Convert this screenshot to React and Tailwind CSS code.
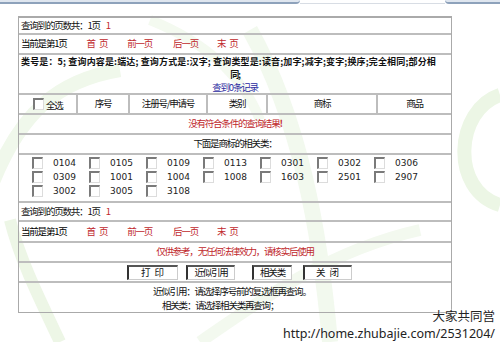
import React from 'react';

const codes = ['0104', '0105', '0109', '0113', '0301', '0302', '0306', '0309', '1001', '1004', '1008', '1603', '2501', '2907', '3002', '3005', '3108'];

function Box() {
  return <span className="inline-block h-[12px] w-[11px] shrink-0 border-l-2 border-t-2 border-b border-r border-l-[#7a7a7a] border-t-[#7a7a7a] border-b-[#dcdcdc] border-r-[#dcdcdc] bg-white" />;
}

function Btn({ children, className = '' }) {
  return (
    <span className={`flex h-[15px] items-center justify-center border-l-2 border-t-2 border-b border-r border-l-[#333] border-t-[#555] border-b-[#ccc] border-r-[#ccc] bg-white ${className}`}>
      {children}
    </span>
  );
}

function Pager({ first, second }) {
  return (
    <>
      <div className={`flex items-center border-b-2 border-[#bdbdbd] pl-[2px] ${first}`}>
        <span>查询到的页数共：1页</span>
        <span className="ml-[6px] text-[#c0282c]">1</span>
      </div>
      <div className={`flex items-center border-b-2 border-[#bdbdbd] pl-[2px] text-[#c0282c] ${second}`}>
        <span className="text-black">当前是第1页</span>
        <span className="ml-[20px]">首<span className="ml-[4px]">页</span></span>
        <span className="ml-[20px]">前一页</span>
        <span className="ml-[21px]">后一页</span>
        <span className="ml-[19px]">末<span className="ml-[4px]">页</span></span>
      </div>
    </>
  );
}

export default function App() {
  return (
    <div className='relative h-[342px] w-[500px] overflow-hidden bg-white font-["Noto_Sans_CJK_SC",sans-serif] text-[9.5px] leading-none tracking-[-1.2px] text-[#111]'>
      <svg className="absolute inset-0" width="500" height="342" viewBox="0 0 500 342" fill="none">
        <path d="M-10 190 C 20 110, 60 80, 120 70" stroke="#f0f8eb" strokeWidth="14" />
        <path d="M60 342 C 40 300, 20 260, 10 220" stroke="#edf6e6" strokeWidth="12" />
        <path d="M250 30 C 300 120, 320 230, 330 342" stroke="#f2f9ee" strokeWidth="16" />
        <path d="M500 95 C 455 110, 450 190, 500 205" stroke="#ecf6e5" strokeWidth="14" />
        <path d="M200 342 C 260 300, 330 250, 420 230" stroke="#f3f9ef" strokeWidth="12" />
        <path d="M150 20 C 200 40, 240 70, 260 120" stroke="#f4faf0" strokeWidth="10" />
      </svg>

      <div className="relative flex h-[5px]">
        <div className="h-[4px] w-[300px] rounded-br-[4px] border-b-2 border-[#8ea2bb] bg-[#dfe6ef]" />
        <div className="h-[4px] flex-1 border-b border-[#d8dde4]" />
        <div className="h-[4px] w-[55px] rounded-bl-[4px] border-b-2 border-[#8ea2bb] bg-[#dfe6ef]" />
      </div>

      <div className="relative ml-[18px] mt-[11px] w-[434px] border border-t-2 border-[#aaaaaa]">
        <Pager first="h-[17px]" second="h-[20px]" />

        <div className="flex h-[40px] flex-col items-center justify-center border-b-2 border-[#bdbdbd] text-[9px] font-bold leading-[13px]">
          <span className="w-full whitespace-nowrap pl-[2px] tracking-[0.15px]">类号是：5; 查询内容是:端达; 查询方式是:汉字; 查询类型是:读音;加字;减字;变字;换序;完全相同;部分相</span>
          <span>同;</span>
          <span className="text-[9.5px] font-normal text-[#2a2aa0]">查到0条记录</span>
        </div>

        <div className="flex h-[20px] border-b-2 border-[#bdbdbd]">
          <div className="flex w-[59px] items-center border-r-2 border-[#bdbdbd] pl-[14px]">
            <Box />
            <span className="ml-[2px] mt-[3px]">全选</span>
          </div>
          <div className="flex w-[52px] items-center justify-center border-r-2 border-[#bdbdbd]">序号</div>
          <div className="flex w-[78px] items-center justify-center border-r-2 border-[#bdbdbd]">注册号/申请号</div>
          <div className="flex w-[60px] items-center justify-center border-r-2 border-[#bdbdbd]">类别</div>
          <div className="flex w-[110px] items-center justify-center border-r-2 border-[#bdbdbd]">商标</div>
          <div className="flex flex-1 items-center justify-center">商品</div>
        </div>

        <div className="flex h-[20px] items-center justify-center border-b-2 border-[#bdbdbd] text-[#c0282c]">没有符合条件的查询结果<b>!</b></div>
        <div className="flex h-[20px] items-center justify-center border-b-2 border-[#bdbdbd]">下面是商标的相关类：</div>

        <div className="grid h-[48px] grid-cols-[repeat(7,57px)] content-start gap-y-[2px] border-b-2 border-[#bdbdbd] pl-[13px] pt-[2px]">
          {codes.map((c) => (
            <div key={c} className="flex h-[12px] items-center">
              <Box />
              <span className='ml-[10px] font-["DejaVu_Sans",sans-serif] text-[9px] tracking-normal text-[#222]'>{c}</span>
            </div>
          ))}
        </div>

        <Pager first="h-[19px]" second="h-[21px]" />

        <div className="flex h-[20px] items-center justify-center border-b-2 border-[#bdbdbd] text-[#c0282c]">仅供参考，无任何法律效力，请核实后使用</div>

        <div className="flex h-[20px] items-center border-b-2 border-[#bdbdbd] pl-[108px]">
          <Btn className="w-[51px] tracking-[1px]">打 印</Btn>
          <Btn className="ml-[8px] w-[49px]">近似引用</Btn>
          <Btn className="ml-[17px] w-[40px]">相关类</Btn>
          <Btn className="ml-[11px] w-[49px] tracking-[1px]">关 闭</Btn>
        </div>

        <div className="flex h-[29px] flex-col justify-center gap-[2px] leading-[12px]">
          <span className="ml-[134px]">近似引用：请选择序号前的复选框再查询。</span>
          <span className="ml-[143px]">相关类：请选择相关类再查询；</span>
        </div>
      </div>

      <div className="absolute bottom-0 right-[5px] flex flex-col items-end font-['Noto_Sans',sans-serif] text-[12.5px] tracking-normal text-[#222] [text-shadow:0_0_2px_#fff,0_0_2px_#fff]">
        <span className='font-["Noto_Sans_CJK_SC",sans-serif] leading-[18px]'>大家共同営</span>
        <span className="leading-[17px]">http://home.zhubajie.com/2531204/</span>
      </div>
    </div>
  );
}
